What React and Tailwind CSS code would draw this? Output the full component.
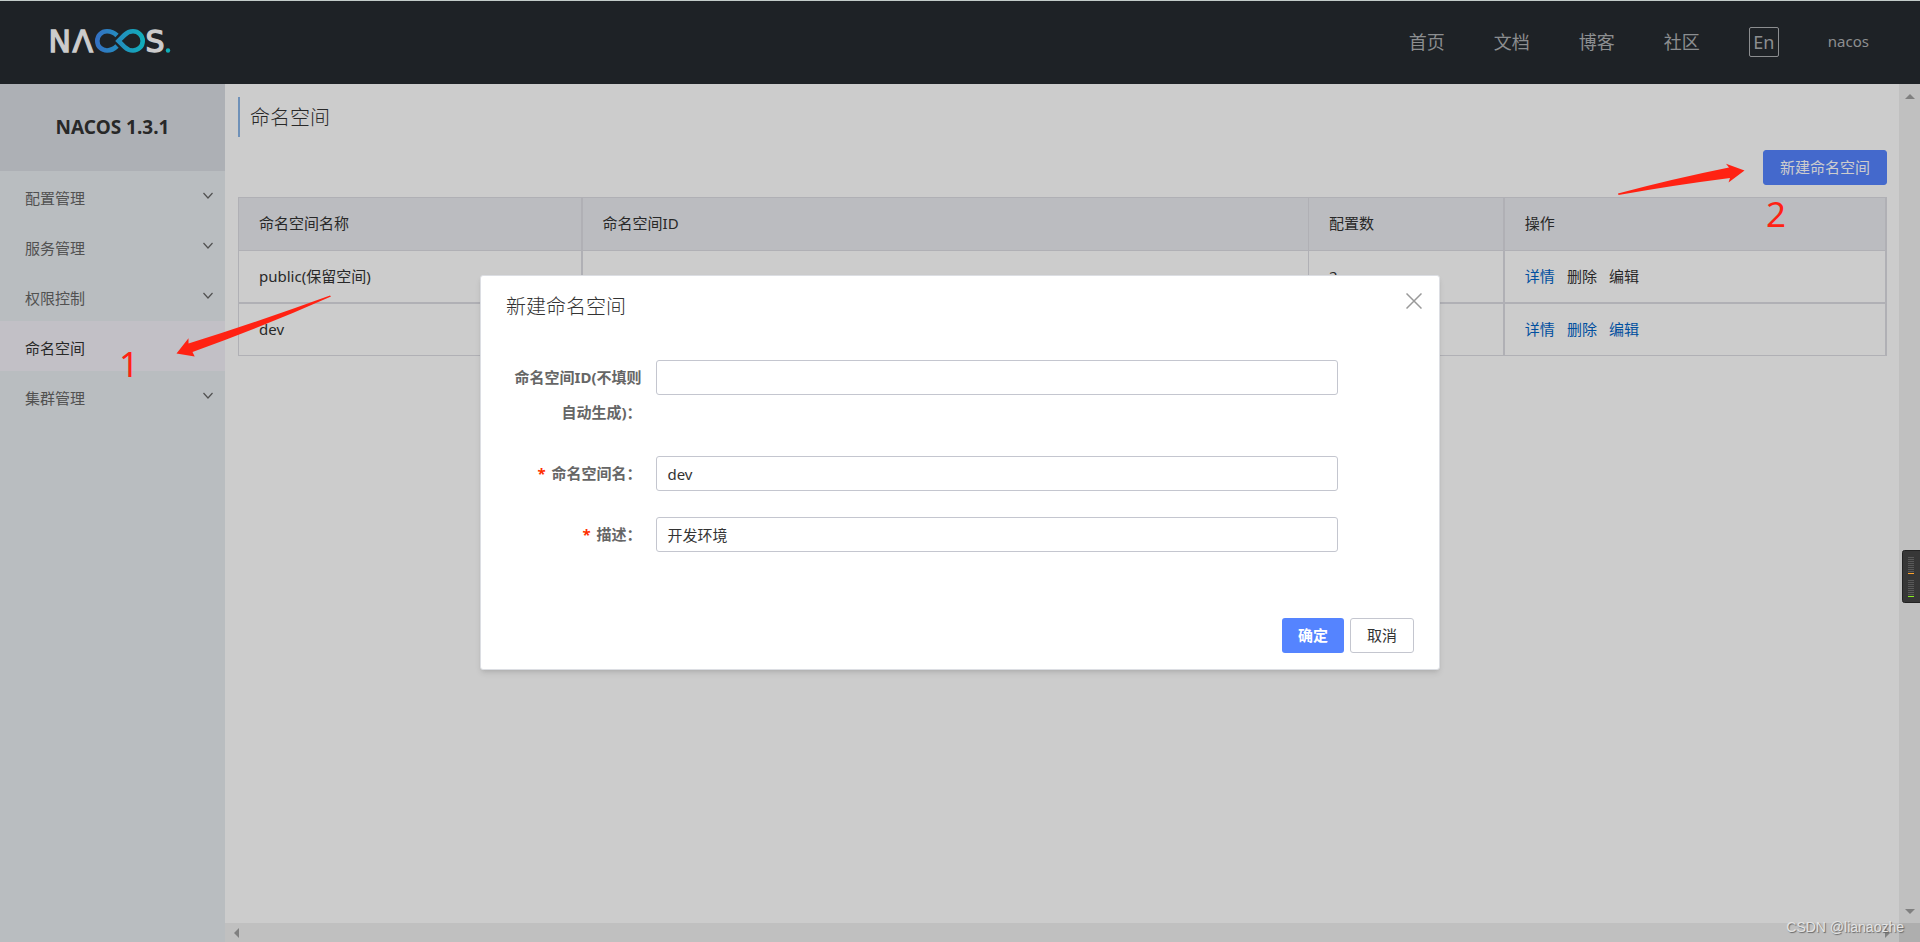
import { useState } from "react";

const navLinks = ["首页", "文档", "博客", "社区"];

const menuItems = [
    { name: "配置管理", children: true },
    { name: "服务管理", children: true },
    { name: "权限控制", children: true },
    { name: "命名空间", children: false },
    { name: "集群管理", children: true },
];

const namespaces = [
    { name: "public(保留空间)", id: "", count: 2, locked: true },
    { name: "dev", id: "", count: 0, locked: false },
];

const Logo = () => (
    <svg width="132" height="42" viewBox="-5 -6 132 42" role="img" aria-label="NACOS">
        <defs>
            <linearGradient id="loop" x1="44" x2="95" y1="0" y2="0" gradientUnits="userSpaceOnUse">
                <stop offset="0" stopColor="#4489f4" />
                <stop offset="1" stopColor="#14dbe8" />
            </linearGradient>
        </defs>
        <g fill="#fff" fontFamily="'DejaVu Sans', sans-serif" fontSize="30" stroke="#fff" strokeWidth="1.3">
            <text x="-1.5" y="24">N</text>
            <text x="22.5" y="24">Λ</text>
            <text x="95.5" y="24">S</text>
        </g>
        <g fill="none" stroke="url(#loop)" strokeWidth="4.6">
            <path d="M67 7.5C64 4.5 61 3.3 57 3.3C51.5 3.3 47.3 7.5 47.3 12.9C47.3 18.3 51.5 22.5 57 22.5C61 22.5 64 21 67 18" />
            <path d="M68.5 12.9L74.5 7C77 4.5 79.5 3.3 83 3.3C88.4 3.3 92.7 7.5 92.7 12.9C92.7 18.3 88.4 22.5 83 22.5C79.5 22.5 77 21.2 74.5 18.8Z" />
        </g>
        <circle cx="118" cy="22.5" r="2.2" fill="#14dbe8" />
    </svg>
);

const Header = () => (
    <header className="flex h-[84px] shrink-0 items-center justify-between border-t border-[#f4fffc] bg-[#262b30] pr-[51px] pl-[45px] text-[#b0b2b4]">
        <a href="#home" className="block">
            <Logo />
        </a>
        <nav className="flex items-center gap-[49px] pb-px text-lg">
            {navLinks.map((link) => (
                <a key={link} href="#nav">{link}</a>
            ))}
            <button className="h-[30px] w-[30px] rounded-xs border border-[#b0b2b4] text-lg leading-6">En</button>
            <a href="#user" className="text-[15px]">nacos</a>
        </nav>
    </header>
);

const Sidebar = () => (
    <aside className="w-[225px] shrink-0 bg-[#e8edf1]">
        <h1 className="flex h-[87px] items-center justify-center bg-[#d9dde3] text-[19px] font-bold text-[#333]">
            NACOS 1.3.1
        </h1>
        <ul>
            {menuItems.map((item) => (
                <li key={item.name}>
                    <a
                        href="#menu"
                        className={`flex h-[50px] items-center justify-between pt-1 pr-3 pl-[25px] ${
                            item.children ? "text-[#666]" : "bg-[#f3f1f8] text-[#333]"
                        }`}
                    >
                        {item.name}
                        {item.children && (
                            <svg width="10" height="12" viewBox="0 0 10 12" fill="none" stroke="#666" strokeWidth="1.2">
                                <path d="M0.5 1L5 6L9.5 1" />
                            </svg>
                        )}
                    </a>
                </li>
            ))}
        </ul>
    </aside>
);

const NamespaceTable = () => (
    <table className="mt-3 w-full table-fixed border-separate border-spacing-0 border-r border-l border-[#dcdde3] text-left">
        <colgroup>
            <col className="w-[20.8%]" />
            <col className="w-[44.1%]" />
            <col className="w-[11.9%]" />
            <col />
        </colgroup>
        <thead>
            <tr className="h-[54px] bg-[#eaebf0] *:border-y *:border-[#dcdde3] *:px-5 *:pb-0.5 *:font-normal">
                <th className="border-r">命名空间名称</th>
                <th className="border-l">命名空间ID</th>
                <th className="border-x">配置数</th>
                <th className="border-x">操作</th>
            </tr>
        </thead>
        <tbody>
            {namespaces.map((item, index) => (
                <tr
                    key={item.name}
                    className={`*:border-b *:border-[#dcdde3] *:px-5 ${index > 0 ? "h-[53px] *:border-t" : "h-[52px]"}`}
                >
                    <td className="border-r">{item.name}</td>
                    <td className="border-l">{item.id}</td>
                    <td className="border-x">{item.count}</td>
                    <td className="border-x">
                        <div className="flex gap-3 text-[#0064c8]">
                            <a href="#detail">详情</a>
                            <a href="#delete" className={item.locked ? "text-[#333]" : ""}>删除</a>
                            <a href="#edit" className={item.locked ? "text-[#333]" : ""}>编辑</a>
                        </div>
                    </td>
                </tr>
            ))}
        </tbody>
    </table>
);

const ScrollArrow = ({ points }) => (
    <svg width="10" height="10" viewBox="0 0 10 10" fill="#a0a0a0">
        <polygon points={points} />
    </svg>
);

const Field = ({ id, label, required, value, onChange }) => (
    <div className="flex items-start">
        <label htmlFor={id} className="w-1/6 pr-[15px] text-right leading-[35px] font-bold text-[#666]">
            {required && <span className="mr-0.5 text-[#ff3000]">* </span>}
            {label}
        </label>
        <input
            id={id}
            value={value}
            onChange={onChange}
            className="h-[35px] w-3/4 rounded-[3px] border border-[#c4c6cf] px-2.5 text-[#333] outline-none"
        />
    </div>
);

const CreateDialog = () => {
    const [form, setForm] = useState({ id: "", name: "dev", desc: "开发环境" });
    const update = (key) => (e) => setForm({ ...form, [key]: e.target.value });

    return (
        <div role="dialog" className="mt-[275px] w-1/2 rounded-[3px] border border-[#dcdee3] bg-white pr-[25px] pb-4 pl-6 shadow-md">
            <div className="flex justify-between pt-[17px]">
                <h2 className="pl-px text-xl font-light text-[#333]">新建命名空间</h2>
                <button aria-label="关闭" className="-mr-2 h-4">
                    <svg width="16" height="16" viewBox="0 0 16 16" fill="none" stroke="#999" strokeWidth="1.5">
                        <path d="M0.5 0.5L15.5 15.5M15.5 0.5L0.5 15.5" />
                    </svg>
                </button>
            </div>
            <form className="mt-[39px] flex flex-col gap-[26px]">
                <Field id="ns-id" label="命名空间ID(不填则自动生成)：" value={form.id} onChange={update("id")} />
                <Field id="ns-name" label="命名空间名：" required value={form.name} onChange={update("name")} />
                <Field id="ns-desc" label="描述：" required value={form.desc} onChange={update("desc")} />
            </form>
            <div className="mt-[66px] flex justify-end gap-1.5">
                <button className="h-[35px] rounded-[3px] bg-[#5584ff] px-4 font-bold text-white">确定</button>
                <button className="h-[35px] rounded-[3px] border border-[#c4c6cf] px-4 text-[#333]">取消</button>
            </div>
        </div>
    );
};

// small level meter docked to the right edge of the window
const Meter = () => (
    <svg className="absolute top-[550px] right-0" width="18" height="53" viewBox="0 0 18 53">
        <rect x="0.5" y="0.5" width="20" height="52" rx="2" fill="#373737" stroke="#222" />
        {[7, 30].map((top) =>
            [0, 1, 2, 3, 4, 5, 6, 7].map((i) => (
                <rect key={`${top}-${i}`} x="6" y={top + i * 2} width="6" height="1" fill="#595959" />
            ))
        )}
        <rect x="6" y="23" width="6" height="1" fill="#ffa32b" />
        <rect x="6" y="46" width="6" height="1" fill="#86f01e" />
    </svg>
);

const Annotations = () => (
    <div className="pointer-events-none absolute inset-0 text-[35px] leading-none text-[#ff2213]">
        <svg className="absolute top-[290px] left-[170px]" width="170" height="70" viewBox="170 290 170 70" fill="currentColor">
            <path d="M176.5 353.5L188.5 338.3L188.5 343.6Q260 321 330 295.5L331 296.5Q260 328 192.5 352L194.7 356.4Z" />
        </svg>
        <span className="absolute top-[346px] left-[119px]">1</span>
        <svg className="absolute top-[155px] right-[170px]" width="140" height="45" viewBox="1610 155 140 45" fill="currentColor">
            <path d="M1744.5 170.5L1726 163.7L1729 167.5Q1672 179 1618 193.5L1618.5 195Q1675 185 1730 178L1728.5 182.5Z" />
        </svg>
        <span className="absolute top-[196px] right-[134px]">2</span>
    </div>
);

const App = () => {
    return (
        <div className="relative flex h-screen flex-col overflow-hidden bg-white font-['Noto_Sans','Noto_Sans_CJK_SC',sans-serif] text-[15px] text-[#333]">
            <Header />
            <div className="flex min-h-0 flex-1">
                <Sidebar />
                <div className="flex min-w-0 flex-1 flex-col">
                    <div className="flex min-h-0 flex-1">
                        <main className="min-w-0 flex-1 pt-[13px] pr-3 pl-[13px]">
                            <h2 className="flex h-10 items-center border-l-2 border-[#8bb6e6] pt-0.5 pl-2.5 text-xl font-light">命名空间</h2>
                            <div className="mt-[13px] flex justify-end">
                                <button className="h-[35px] rounded-[3px] border border-[#5584ff] bg-[#5584ff] px-4 text-white">新建命名空间</button>
                            </div>
                            <NamespaceTable />
                        </main>
                        <div className="flex w-[21px] flex-col items-center justify-between bg-[#f1f1f1] py-[7px]">
                            <ScrollArrow points="0,8 5,3 10,8" />
                            <ScrollArrow points="0,3 5,8 10,3" />
                        </div>
                    </div>
                    <div className="flex h-[19px] shrink-0 bg-[#f1f1f1]">
                        <div className="flex flex-1 items-center justify-between px-[7px]">
                            <ScrollArrow points="7,0 2,5 7,10" />
                            <ScrollArrow points="3,0 8,5 3,10" />
                        </div>
                        <div className="w-[21px] bg-[#dadada]" />
                    </div>
                </div>
            </div>
            <div className="absolute inset-0 flex items-start justify-center bg-black/20">
                <CreateDialog />
            </div>
            <Meter />
            <Annotations />
            <p className="absolute right-4 bottom-[5px] font-['Liberation_Sans',sans-serif] text-sm text-[#e4e4e4] [text-shadow:1px_1px_1px_#666]">
                CSDN @lianaozhe
            </p>
        </div>
    );
};

export default App;
